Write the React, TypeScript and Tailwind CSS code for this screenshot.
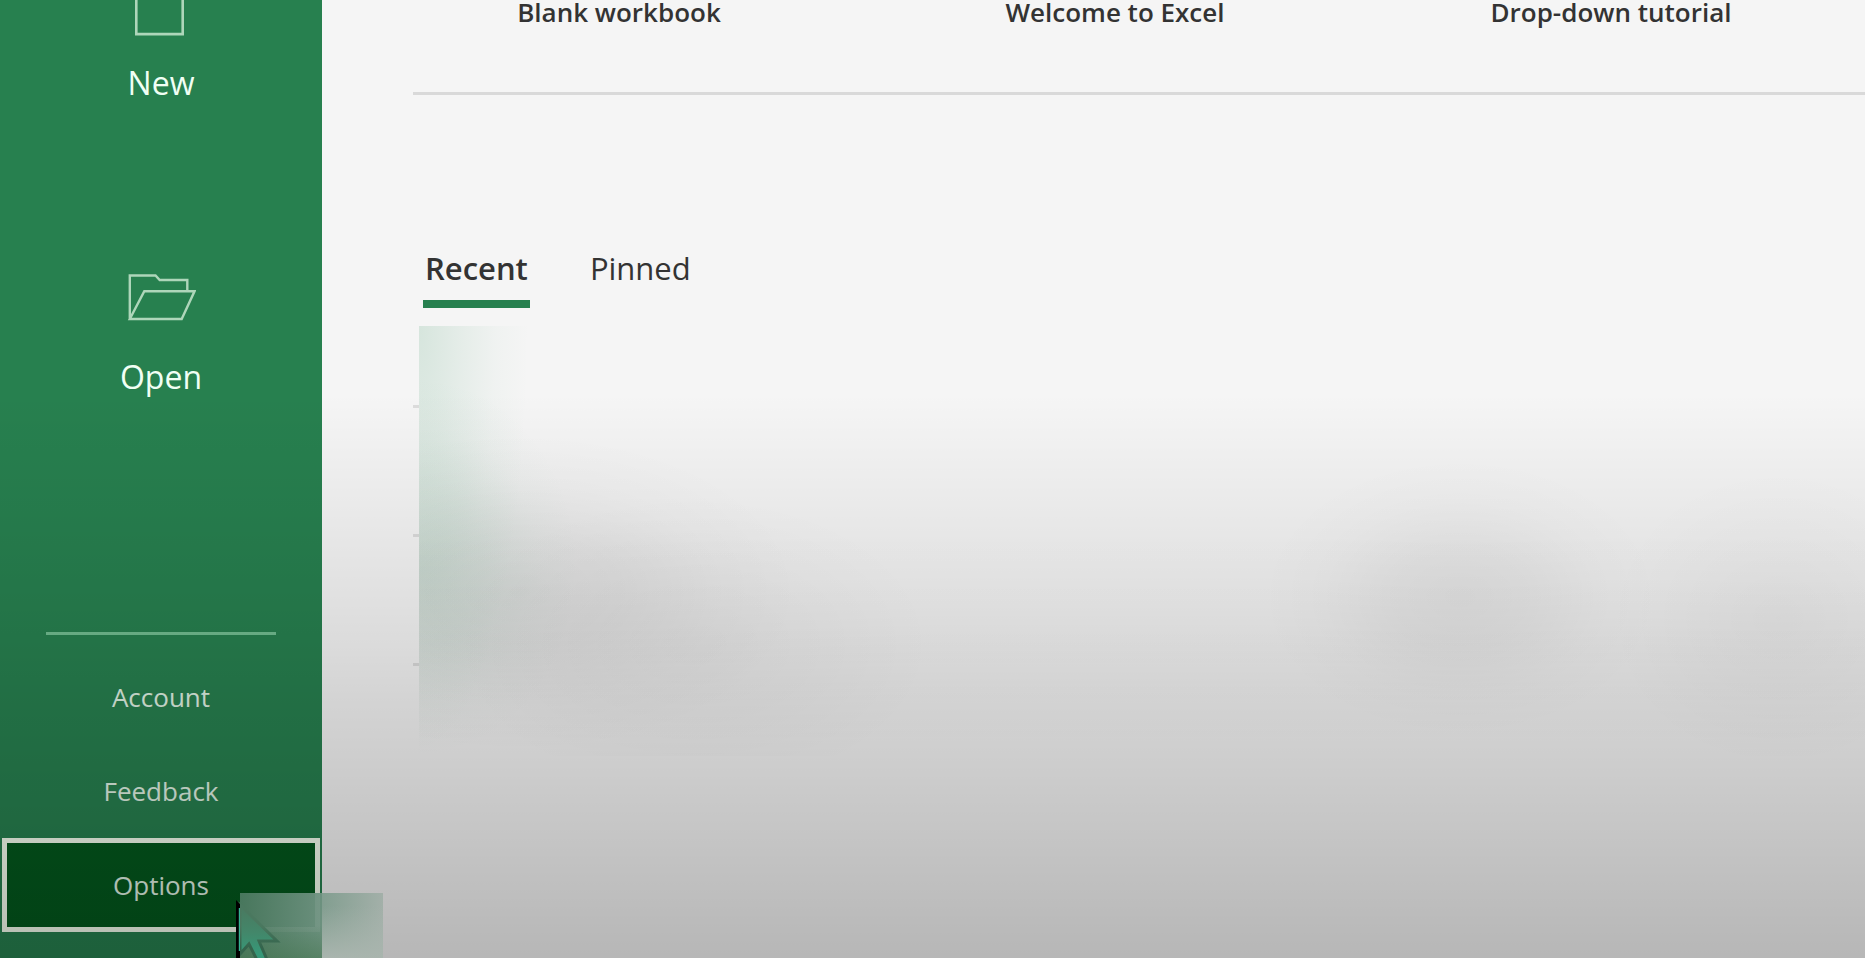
import React from "react";

interface FooterItem {
  label: string;
  selected?: boolean;
}

const footerItems: FooterItem[] = [
  { label: "Account" },
  { label: "Feedback" },
  { label: "Options", selected: true },
];

const templates = ["Blank workbook", "Welcome to Excel", "Drop-down tutorial"];

const NewIcon = () => (
  <svg width="52" height="66" viewBox="0 0 52 66" fill="none" aria-hidden="true">
    <path d="M1.3 1.500h31l15.400 15v47.600H1.300z" stroke="#aed6ba" strokeWidth="2.6" />
  </svg>
);

const FolderIcon = () => (
  <svg width="70" height="47" viewBox="0 0 70 47" fill="none" aria-hidden="true">
    <path
      d="M3.8 45V1.500H29.500L33.700 6H61.300V17.300M3.800 45H55.700L68.500 17.300H18.300z"
      stroke="#aed6ba"
      strokeWidth="2.4"
    />
  </svg>
);

const Pointer = () => (
  <svg
    className="absolute left-[235px] top-[898px]"
    width="50"
    height="60"
    viewBox="0 0 50 60"
    aria-hidden="true"
  >
    <defs>
      <linearGradient id="pointer-fill" x1="0" y1="0" x2="0" y2="1">
        <stop offset="0" stopColor="#4a785f" />
        <stop offset="0.45" stopColor="#43876a" />
        <stop offset="0.8" stopColor="#369878" />
      </linearGradient>
      <linearGradient id="pointer-edge" x1="0" y1="0" x2="0" y2="1">
        <stop offset="0" stopColor="#4a785f" />
        <stop offset="0.35" stopColor="#4a785f" />
        <stop offset="0.7" stopColor="#34644c" />
      </linearGradient>
    </defs>
    <path
      d="M5 7L42 43H24L33 64L25 68L14 46L5 56z"
      fill="url(#pointer-fill)"
      stroke="url(#pointer-edge)"
      strokeWidth="3"
    />
    <path d="M1 2L5 6V60H1z" fill="#000000" />
    <path d="M3.800 10H5V53H3.800z" fill="#35b493" />
  </svg>
);

const Sidebar = () => (
  <nav
    aria-label="File"
    className="flex w-[322px] shrink-0 flex-col bg-[#27804f] text-[#f0fff4]"
  >
    <button className="-mt-[30px] flex flex-col items-center gap-[27px] text-[32px] leading-10">
      <NewIcon />
      New
    </button>
    <button className="mt-[171px] flex flex-col items-center gap-9 text-[32px] leading-10">
      <FolderIcon />
      Open
    </button>
    <hr className="mx-[46px] mt-[235px] border-t-[3px] border-[#72bd91]" />
    <div className="mt-[15px] flex flex-col px-[2px] text-[26px] leading-10 text-[#e0f2e4]">
      {footerItems.map((item) => (
        <button
          key={item.label}
          className={`h-[94px] ${
            item.selected ? "border-[5px] border-[#f6fff0] bg-[#03581d]" : ""
          }`}
        >
          {item.label}
        </button>
      ))}
    </div>
  </nav>
);

const RecentFiles = () => (
  <div className="relative ml-[91px] mt-[18px] h-[430px]">
    <ul>
      {[0, 1, 2].map((row) => (
        <li
          key={row}
          className={`border-b-[3px] border-[#dcdcdc] ${
            row === 0 ? "h-[82px]" : "h-[129px]"
          }`}
        />
      ))}
    </ul>
    {/* frosted cover over the file names */}
    <div className="absolute inset-y-0 left-[6px] right-0 bg-[#f5f5f5] bg-[radial-gradient(ellipse_160px_190px_at_0%_56%,#2f8f5a1c,#2f8f5a12_40%,#2f8f5a05_75%,transparent),radial-gradient(ellipse_110px_430px_at_0%_0%,#2f8f5a28,#2f8f5a14_40%,#2f8f5a07_70%,transparent),radial-gradient(ellipse_280px_160px_at_7%_62%,#00000012,#0000000d_35%,#00000004_70%,transparent),radial-gradient(ellipse_240px_150px_at_19%_74%,#00000009,#00000005_50%,transparent),radial-gradient(ellipse_200px_140px_at_72%_63%,#0000000e,#0000000a_35%,#00000003_70%,transparent),radial-gradient(ellipse_170px_150px_at_94%_68%,#00000008,#00000004_50%,transparent),linear-gradient(180deg,transparent_45%,#00000003_75%,transparent)]" />
  </div>
);

const App = () => {
  return (
    <div className="relative flex min-h-screen overflow-hidden bg-[#f5f5f5] font-['Open_Sans','Noto_Sans',sans-serif]">
      <Sidebar />
      <main className="min-w-0 flex-1 text-[#333333]">
        <div className="ml-[49px] mr-1.5 grid grid-cols-3 text-[26px] font-semibold leading-6">
          {templates.map((name) => (
            <button key={name}>{name}</button>
          ))}
        </div>
        <hr className="ml-[91px] mt-[68px] border-t-[3px] border-[#d9d9d9]" />
        <div role="tablist" className="ml-[101px] mt-[153px] flex gap-[58px] text-[31px] leading-10">
          <button
            role="tab"
            aria-selected="true"
            className="border-b-8 border-[#27804f] px-[2px] pb-3 font-semibold"
          >
            Recent
          </button>
          <button
            role="tab"
            aria-selected="false"
            className="border-b-8 border-transparent px-[2px] pb-3"
          >
            Pinned
          </button>
        </div>
        <RecentFiles />
      </main>
      {/* dimming towards the bottom of the window */}
      <div className="pointer-events-none absolute inset-0 bg-[linear-gradient(180deg,transparent_41%,#00000008_49%,#00000011_58%,#00000016_63%,#0000001c_68%,#00000023_73%,#0000002a_80%,#00000033_88%,#00000041_100%)]" />
      <div className="pointer-events-none absolute left-[240px] top-[893px] flex h-[65px] w-[143px]">
        <div className="w-[82px] bg-linear-to-r from-[#4c7a61f0] to-[#719483f0]">
          <div className="h-full bg-linear-to-b from-transparent from-50% to-[#45754f88]" />
        </div>
        <div className="flex-1 bg-linear-to-r from-[#829e90] to-[#a3b0a9]">
          <div className="h-full bg-linear-to-b from-transparent from-20% to-[#a9b5ae]" />
        </div>
      </div>
      <Pointer />
    </div>
  );
};

export default App;
